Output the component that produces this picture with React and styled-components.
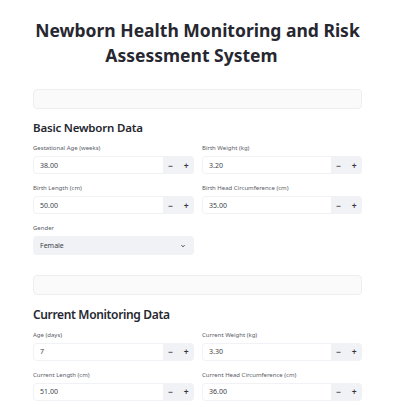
import React from 'react'
import styled, { createGlobalStyle } from 'styled-components'

const GlobalStyle = createGlobalStyle`
  body {
    margin: 0;
    background: #ffffff;
    font-family: "Noto Sans", "Open Sans", sans-serif;
    color: #31333f;
  }
`

const Page = styled.main`
  width: 329px;
  margin-left: 33px;
  padding-top: 18px;
`

const Title = styled.h1`
  margin: 0 0 21px;
  text-align: center;
  white-space: nowrap;
  font-size: 17.5px;
  line-height: 25px;
  font-weight: 700;
  color: #262730;
`

// streamlit keeps room for the heading anchor link after the last line
const AnchorSpace = styled.span`
  display: inline-block;
  width: 12px;
`

const EmptyBox = styled.div`
  box-sizing: border-box;
  height: 19.5px;
  border: 1px solid #eeeef0;
  border-radius: 4px;
  background: #fafafa;
`

const SectionTitle = styled.h2`
  margin: ${p => (p.$large ? '12.3px 0 6.7px' : '12.6px 0 8.4px')};
  font-size: ${p => (p.$large ? '12px' : '11.5px')};
  line-height: ${p => (p.$large ? '16px' : '14px')};
  letter-spacing: ${p => (p.$large ? '-0.35px' : '-0.2px')};
  font-weight: 600;
  color: #262730;
`

const Grid = styled.div`
  display: grid;
  grid-template-columns: 161px 160px;
  column-gap: 8px;
  row-gap: 9px;
  margin-bottom: 20px;
`

const Field = styled.div`
  display: flex;
  flex-direction: column;
`

const Label = styled.label`
  font-size: 6px;
  line-height: 10px;
  color: #5a5c66;
  margin-bottom: 3px;
  white-space: nowrap;
`

const NumberBox = styled.div`
  display: flex;
  height: 18px;
  border-radius: 4px;
  overflow: hidden;
`

const NumberValue = styled.div`
  flex: 1;
  display: flex;
  align-items: center;
  padding-left: 6px;
  font-size: 7px;
  color: #3d3f4a;
  border: 1px solid #f0f2f6;
  border-right: none;
  border-radius: 4px 0 0 4px;
  background: #ffffff;
`

const StepButton = styled.button`
  width: 15.5px;
  padding: 0;
  border: none;
  background: #f0f2f6;
  color: #31333f;
  font-family: inherit;
  font-size: 8.5px;
  font-weight: 600;
  display: flex;
  align-items: center;
  justify-content: center;
`

const Select = styled.div`
  display: flex;
  align-items: center;
  justify-content: space-between;
  height: 19px;
  padding: 0 8px 0 7px;
  border-radius: 4px;
  background: #f0f2f6;
  font-size: 7px;
  color: #3d3f4a;
`

const NumberInput = ({ label, value }) => (
  <Field>
    <Label>{label}</Label>
    <NumberBox>
      <NumberValue>{value}</NumberValue>
      <StepButton>−</StepButton>
      <StepButton>+</StepButton>
    </NumberBox>
  </Field>
)

const basicData = [
  { label: 'Gestational Age (weeks)', value: '38.00' },
  { label: 'Birth Weight (kg)', value: '3.20' },
  { label: 'Birth Length (cm)', value: '50.00' },
  { label: 'Birth Head Circumference (cm)', value: '35.00' },
]

const currentData = [
  { label: 'Age (days)', value: '7' },
  { label: 'Current Weight (kg)', value: '3.30' },
  { label: 'Current Length (cm)', value: '51.00' },
  { label: 'Current Head Circumference (cm)', value: '36.00' },
]

const App = () => (
  <>
    <GlobalStyle />
    <Page>
      <Title>
        Newborn Health Monitoring and Risk
        <br />
        Assessment System
        <AnchorSpace />
      </Title>
      <EmptyBox />
      <SectionTitle>Basic Newborn Data</SectionTitle>
      <Grid>
        {basicData.map(item => (
          <NumberInput key={item.label} label={item.label} value={item.value} />
        ))}
        <Field>
          <Label>Gender</Label>
          <Select>
            Female
            <svg width="6" height="6" viewBox="0 0 24 24" fill="none" stroke="#31333f" strokeWidth="4">
              <path d="M6 9l6 6 6-6" />
            </svg>
          </Select>
        </Field>
      </Grid>
      <EmptyBox />
      <SectionTitle $large>Current Monitoring Data</SectionTitle>
      <Grid>
        {currentData.map(item => (
          <NumberInput key={item.label} label={item.label} value={item.value} />
        ))}
      </Grid>
    </Page>
  </>
)

export default App
